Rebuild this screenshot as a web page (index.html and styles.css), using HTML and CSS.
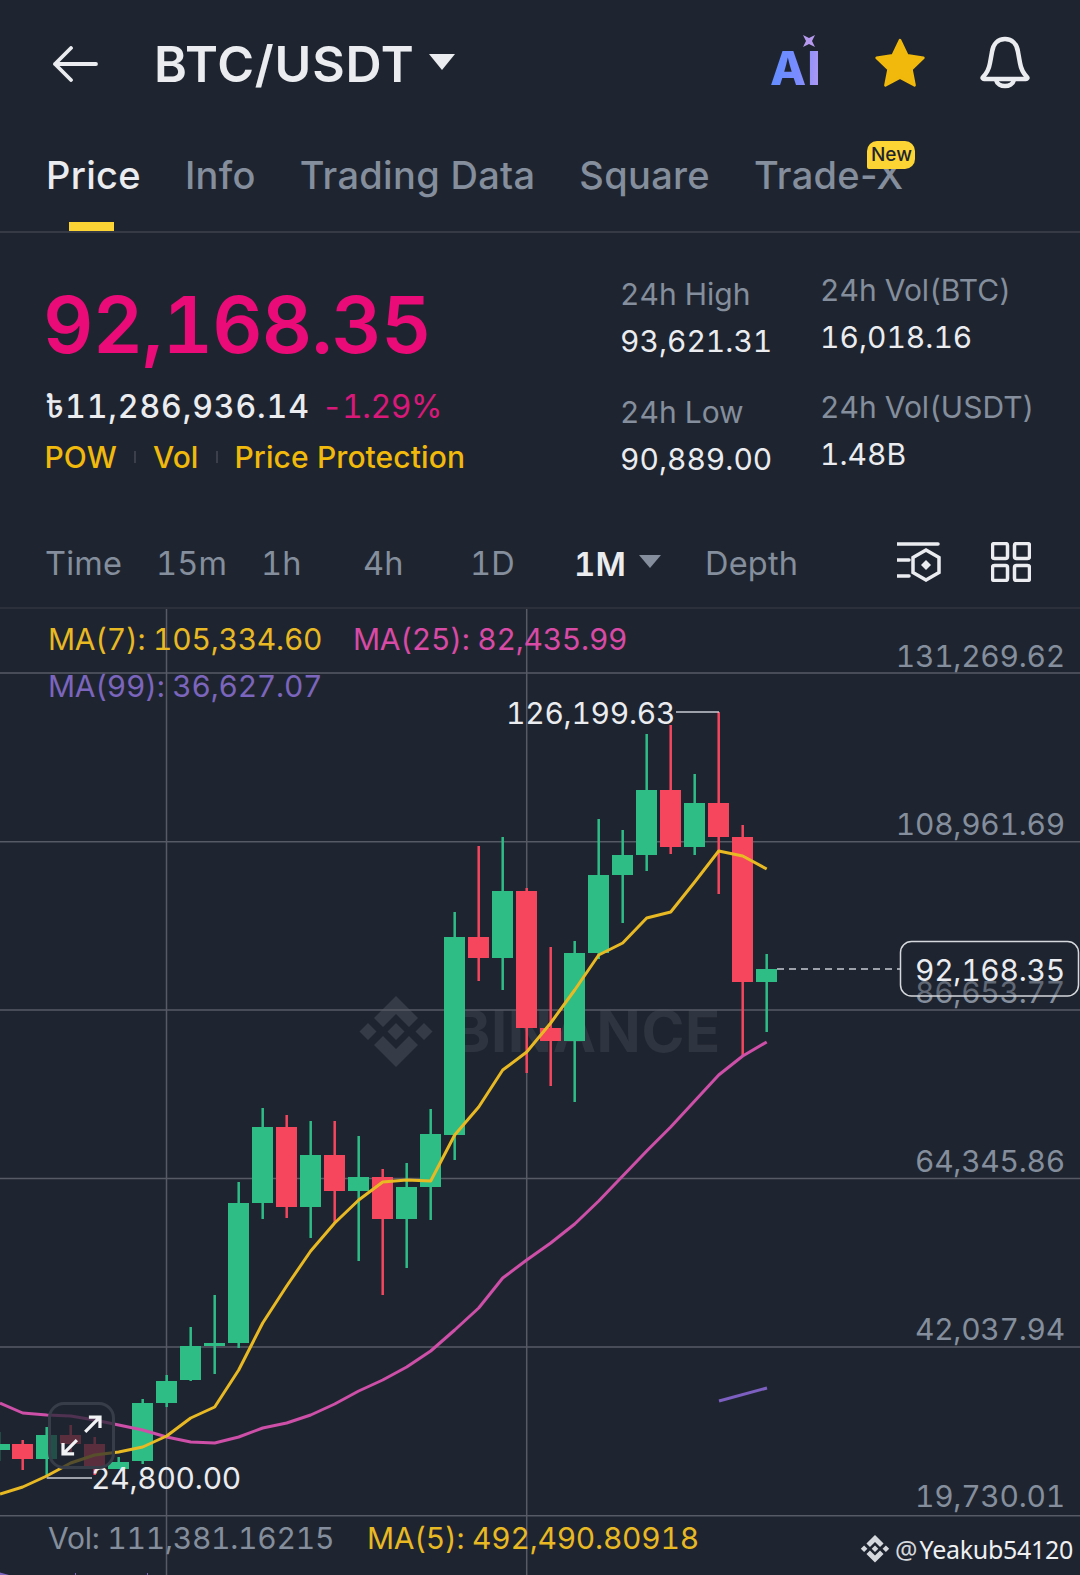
FILE: index.html
```html
<!DOCTYPE html>
<html lang="en">
<head>
<meta charset="utf-8">
<title>BTC/USDT</title>
<link rel="stylesheet" href="styles.css">
</head>
<body>
<main class="page">
  <header class="topbar">
    <svg class="back" viewBox="0 0 46 36"><path d="M44 18H3M19 2 3 18l16 16"/></svg>
    <h1 class="pair">BTC/USDT</h1>
    <svg class="pair-caret" viewBox="0 0 26 16"><path d="M0 0h26L13 16z"/></svg>
    <div class="top-icons">
      <div class="ai"><span class="ai-text">AI</span>
        <svg class="ai-star" viewBox="0 0 12 12"><path d="M0 0 6 3l6-3-3 6 3 6-6-3-6 3 3-6z"/></svg>
      </div>
      <svg class="fav" viewBox="0 0 50 50"><path d="M25 3 32 17.500 47.500 20 36 31 39 46.500 25 39 11 46.500 14 31 2.500 20 18 17.500z"/></svg>
      <svg class="bell" viewBox="0 0 50 53"><path d="M3 41c4-4 6-8 7-14l2-11C13 8 18 3 25 3s12 5 13 13l2 11c1 6 3 10 7 14 1 1 0 2-1 2H4c-1 0-2-1-1-2zM16 44c1 4 5 6 9 6s8-2 9-6"/></svg>
    </div>
  </header>

  <nav class="tabs">
    <a class="tab tab-on">Price</a>
    <a class="tab">Info</a>
    <a class="tab">Trading Data</a>
    <a class="tab">Square</a>
    <a class="tab tab-new">Trade-X<span class="new-badge">New</span></a>
  </nav>

  <section class="stats">
    <div class="stats-left">
      <div class="last-price">92,168.35</div>
      <div class="sub-price"><span class="fiat">৳11,286,936.14</span><span class="change">-1.29%</span></div>
      <div class="tags"><span>POW</span><i class="tag-sep"></i><span>Vol</span><i class="tag-sep"></i><span>Price Protection</span></div>
    </div>
    <div class="col col-a">
      <div class="k k-high">24h High</div><div class="v">93,621.31</div>
      <div class="k k-low">24h Low</div><div class="v">90,889.00</div>
    </div>
    <div class="col col-b">
      <div class="k">24h Vol(BTC)</div><div class="v">16,018.16</div>
      <div class="k k-usdt">24h Vol(USDT)</div><div class="v">1.48B</div>
    </div>
  </section>

  <section class="intervals">
    <span class="iv iv1">Time</span>
    <span class="iv iv2">15m</span>
    <span class="iv iv3">1h</span>
    <span class="iv iv4">4h</span>
    <span class="iv iv5">1D</span>
    <span class="iv iv6 iv-on">1M<svg class="iv-caret" viewBox="0 0 22 13"><path d="M0 0h22L11 13z"/></svg></span>
    <span class="iv iv7">Depth</span>
    <svg class="tool-a" viewBox="0 0 46 42"><path d="M0 3h41M0 19h12M0 35h12"/><path d="M29 9l13 7.500v15L29 39l-13-7.500v-15z"/><path class="solid" d="M29 19l5 5-5 5-5-5z"/></svg>
    <svg class="tool-b" viewBox="0 0 40 40"><rect x="1.500" y="1.500" width="15" height="15" rx="2"/><rect x="23.500" y="1.500" width="15" height="15" rx="2"/><rect x="1.500" y="23.500" width="15" height="15" rx="2"/><rect x="23.500" y="23.500" width="15" height="15" rx="2"/></svg>
  </section>

  <section class="chart">
    <svg class="plot" viewBox="0 609 1080 966">
      <g class="wm">
        <path d="M396 996l22 22-9 9-13-13-13 13-9-9zM396 1067l22-22-9-9-13 13-13-13-9 9zM368 1023l8.500 8.500-8.500 8.500-8.500-8.500zM396 1023l8.500 8.500-8.500 8.500-8.500-8.500zM424 1023l8.500 8.500-8.500 8.500-8.500-8.500z"/>
        <text class="wm-text" x="452" y="1052">BINANCE</text>
      </g>
      <path class="grid" d="M0 673H1080M0 841.700H1080M0 1010H1080M0 1178.600H1080M0 1347H1080M0 1515.700H1080M166.500 609V1575M526.700 609V1575"/>

      <path class="wick-up" d="M-1 1432V1461M46.700 1427V1477M118.700 1457V1469M142.700 1399V1464M166.700 1375V1407M190.700 1327V1381M214.700 1295V1374M238.700 1182V1348M262.700 1108V1219M310.700 1121V1238M358.700 1136V1261M406.700 1163V1268M430.700 1109V1220M454.700 912V1160M502.700 837V990M574.700 941V1102M598.700 819V959M622.700 830V923M646.700 734V871M694.700 774V855M766.700 954V1032"/>
      <path class="wick-dn" d="M22.700 1440V1470M70.700 1425V1452M94.700 1437V1475M286.700 1115V1218M334.700 1121V1223M382.700 1169V1295M478.700 846V981M526.700 888V1073M550.700 947V1086M670.700 725V854M718.700 712V894M742.700 825V1056"/>
      <path class="body-up" d="M-11 1444h21v6h-21zM36 1435h21v24h-21zM108 1462h21v7h-21zM132 1403h21v58h-21zM156 1381h21v22h-21zM180 1346h21v34h-21zM204 1343h21v3h-21zM228 1203h21v140h-21zM252 1127h21v76h-21zM300 1155h21v52h-21zM348 1177h21v14h-21zM396 1187h21v32h-21zM420 1134h21v53h-21zM444 937h21v198h-21zM492 891h21v67h-21zM564 953h21v88h-21zM588 875h21v78h-21zM612 855h21v20h-21zM636 790h21v65h-21zM684 803h21v44h-21zM756 969h21v13h-21z"/>
      <path class="body-dn" d="M12 1444h21v15h-21zM60 1435h21v9h-21zM84 1444h21v22h-21zM276 1127h21v80h-21zM324 1155h21v36h-21zM372 1177h21v42h-21zM468 937h21v21h-21zM516 891h21v137h-21zM540 1028h21v13h-21zM660 790h21v57h-21zM708 803h21v34h-21zM732 837h21v145h-21z"/>

      <path class="ma ma-pink" d="M0 1403 22.700 1413 46.700 1415 70.700 1416 94.700 1420 118.700 1425 142.700 1430 166.700 1437 190.700 1442 214.700 1443 238.700 1437 262.700 1428 286.700 1423 310.700 1415 334.700 1404 358.700 1391 382.700 1380 406.700 1367 430.700 1351 454.700 1330 478.700 1308 502.700 1278 526.700 1260 550.700 1243 574.700 1224 598.700 1201 622.700 1176 646.700 1151 670.700 1127 694.700 1101 718.700 1075 742.700 1056 766.700 1042"/>
      <path class="ma ma-yellow" d="M0 1494 22.700 1487 46.700 1476 70.700 1463 94.700 1455 118.700 1452 142.700 1447 166.700 1436 190.700 1418 214.700 1407 238.700 1370 262.700 1323 286.700 1286 310.700 1251 334.700 1223 358.700 1200 382.700 1182 406.700 1180 430.700 1181 454.700 1135 478.700 1107 502.700 1070 526.700 1052 550.700 1023 574.700 990 598.700 955 622.700 943 646.700 918 670.700 912 694.700 882 718.700 851 742.700 856 766.700 869"/>
      <path class="ma ma-purple" d="M719 1401 767 1388"/>
      <path class="cut-marks" d="M0 1572.500 9 1575H0zM75 1573h1v2h-1zM147 1573h1v2h-1z"/>

      <path class="dash" d="M777 969H900"/>
      <path class="ext" d="M676 712H719M46.700 1478H92"/>

      <text class="t ma7" x="48" y="650">MA(7): 105,334.60</text>
      <text class="t ma25" x="353" y="650">MA(25): 82,435.99</text>
      <text class="t ma99" x="48" y="697">MA(99): 36,627.07</text>
      <text class="t ext-t" x="506" y="724">126,199.63</text>
      <text class="t ext-t" x="91" y="1489">24,800.00</text>
      <text class="t axis" x="1065" y="667">131,269.62</text>
      <text class="t axis" x="1065" y="835">108,961.69</text>
      <text class="t axis" x="1065" y="1003">86,653.77</text>
      <text class="t axis" x="1065" y="1172">64,345.86</text>
      <text class="t axis" x="1065" y="1340">42,037.94</text>
      <text class="t axis" x="1065" y="1507">19,730.01</text>
      <rect class="last-tag" x="900.500" y="941.500" width="178" height="54.500" rx="11"/>
      <text class="t last-t" x="1065" y="981">92,168.35</text>
      <text class="t vol" x="48" y="1549">Vol: 111,381.16215</text>
      <text class="t ma5" x="367" y="1549">MA(5): 492,490.80918</text>
    </svg>

    <div class="expand">
      <svg class="expand-ico" viewBox="0 0 66 66"><path d="M37 29l15-15M41 13h12v12M28 38 14 52M13 41v12h12"/></svg>
    </div>
    <div class="credit">
      <svg class="credit-logo" viewBox="0 0 72 72"><path d="M36 0l22 22-9 9-13-13-13 13-9-9zM36 71l22-22-9-9-13 13-13-13-9 9zM8 27l8.500 8.500-8.500 8.500-8.500-8.500zM36 27l8.500 8.500-8.500 8.500-8.500-8.500zM64 27l8.500 8.500-8.500 8.500-8.500-8.500z"/></svg>
      <span class="credit-at">@</span><span class="credit-name">Yeakub54120</span>
    </div>
  </section>
</main>
</body>
</html>
```

FILE: styles.css
```css
* { box-sizing: border-box; margin: 0; padding: 0; }
html, body { width: 1080px; height: 1575px; overflow: hidden; background: #1f2530; }
body { font-family: Inter, "Noto Sans", "Noto Sans Bengali", "DejaVu Sans", sans-serif; color: #eaecef; font-variant-numeric: tabular-nums; }
.page { width: 1080px; height: 1575px; display: flex; flex-direction: column; overflow: hidden; }

/* top bar */
.topbar { height: 124px; display: flex; align-items: center; padding: 4px 0 0 52px; }
.back { width: 46px; height: 36px; fill: none; stroke: #eaecef; stroke-width: 3.800; stroke-linecap: round; stroke-linejoin: round; }
.pair { margin-left: 56px; font-size: 50px; font-weight: 600; letter-spacing: .8px; line-height: 1; color: #eaecef; }
.pair-caret { width: 26px; height: 16px; margin-left: 14px; margin-top: -4px; fill: #eaecef; }
.top-icons { margin-left: auto; display: flex; align-items: center; margin-top: -3px; }
.ai { position: relative; width: 52px; height: 52px; margin-right: 52px; margin-top: 4px; }
.ai-text { position: absolute; left: 0; bottom: 0; font-size: 47px; line-height: 46px; font-weight: 800; letter-spacing: 1px; background: linear-gradient(95deg, #5f8dff 0%, #7a8cff 55%, #b79af0 100%); -webkit-background-clip: text; background-clip: text; color: transparent; }
.ai-star { position: absolute; left: 33px; top: -4px; width: 12px; height: 12px; fill: #b79af0; }
.fav { width: 52px; height: 52px; fill: #f0b90b; stroke: #f0b90b; stroke-width: 2.500; stroke-linejoin: round; margin-right: 54px; }
.bell { width: 50px; height: 53px; fill: none; stroke: #eaecef; stroke-width: 4.500; stroke-linejoin: round; margin-right: 50px; margin-top: 0; }

/* tabs */
.tabs { height: 109px; display: flex; padding: 24px 0 0 46px; gap: 44px; border-bottom: 2px solid #353a45; font-size: 38px; letter-spacing: .3px; color: #848e9c; font-variant-numeric: normal; }
.tab { position: relative; line-height: 54px; font-weight: 500; height: 83px; }
.tab-on { color: #eaecef; }
.tab-on::after { content: ""; position: absolute; left: 23px; bottom: 0; width: 45px; height: 9px; background: #fcd535; }
.new-badge { position: absolute; right: -12px; top: -7px; width: 48px; height: 28px; border-radius: 10px 10px 10px 2px; background: #fcd535; color: #1f2530; font-size: 19px; font-weight: 500; letter-spacing: 0; line-height: 28px; text-align: center; }

/* stats */
.stats { height: 296px; display: flex; padding-left: 46px; }
.stats-left { width: 574px; }
.last-price { margin-top: 46px; margin-left: -3px; font-size: 78px; line-height: 92px; font-weight: 600; letter-spacing: -.8px; color: #ea0b78; }
.sub-price { margin-top: 14px; display: flex; font-size: 32px; line-height: 44px; }
.fiat { font-weight: 500; letter-spacing: .9px; margin-left: -1px; }
.change { margin-left: 12px; color: #d9187a; letter-spacing: -.5px; }
.tags { margin-top: 8px; margin-left: -1.500px; display: flex; align-items: center; font-size: 30px; letter-spacing: .1px; line-height: 40px; color: #f0b90b; font-weight: 500; }
.tag-sep { display: block; width: 2px; height: 12px; margin: 0 17px; background: #3a3f4b; }
.col { font-size: 30px; }
.col-a { width: 200px; padding-top: 39px; }
.col-b { padding-top: 35px; }
.k { color: #848e9c; line-height: 44px; }
.v { color: #eaecef; line-height: 44px; margin-top: 3px; }
.k-low { margin-top: 27px; }
.k-usdt { margin-top: 26px; }

/* intervals */
.intervals { height: 80px; display: flex; align-items: center; padding: 0 0 8px 45px; font-size: 32.500px; letter-spacing: .2px; color: #848e9c; border-bottom: 2px solid #2b303b; }
.iv { display: flex; align-items: center; line-height: 44px; }
.iv1 { width: 111px; }
.iv2 { width: 105px; }
.iv3 { width: 102px; }
.iv4 { width: 107px; }
.iv5 { width: 104px; }
.iv6 { width: 131px; color: #eaecef; font-weight: 600; font-size: 33px; }
.iv7 { width: 192px; }
.iv-caret { width: 22px; height: 13px; margin-left: 13px; margin-top: -6px; fill: #848e9c; }
.tool-a { width: 46px; height: 42px; margin-top: -4px; fill: none; stroke: #eaecef; stroke-width: 3.500; stroke-linecap: round; margin-right: 48px; }
.tool-a .solid { fill: #eaecef; stroke: none; }
.tool-b { width: 40px; height: 40px; margin-top: -4px; fill: none; stroke: #eaecef; stroke-width: 3.500; }

/* chart */
.chart { position: relative; flex: 1; }
.plot { display: block; width: 1080px; height: 966px; overflow: hidden; }
.wm { fill: #363c47; }
.wm-text { font-size: 58px; font-weight: 700; letter-spacing: .6px; fill: #2f3540; }
.grid { fill: none; stroke: #555a65; stroke-width: 1.500; }
.wick-up, .wick-dn { fill: none; stroke-width: 2.500; }
.wick-up { stroke: #2ebd85; }
.wick-dn { stroke: #f6465d; }
.body-up { fill: #2ebd85; }
.body-dn { fill: #f6465d; }
.ma { fill: none; stroke-width: 3; stroke-linejoin: round; }
.ma-yellow { stroke: #e8b923; }
.ma-pink { stroke: #cd4fa8; }
.ma-purple { stroke: #7c5fc0; }
.cut-marks { fill: #7c65bd; }
.dash { fill: none; stroke: #c8ccd2; stroke-width: 1.500; stroke-dasharray: 7 5; }
.ext { fill: none; stroke: #c8ccd2; stroke-width: 1.500; }
.t { font-family: Inter, "Noto Sans", sans-serif; font-size: 30px; letter-spacing: -.25px; }
.ma7, .ma5 { fill: #e8b923; }
.ma25 { fill: #d84aa5; }
.ma99 { fill: #7c65bd; }
.ext-t, .last-t { fill: #eaecef; }
.axis { fill: #848e9c; text-anchor: end; }
.last-t { text-anchor: end; }
.vol { fill: #848e9c; }
.last-tag { fill: rgba(31, 37, 48, .35); stroke: #d5d8dc; stroke-width: 1.500; }

/* overlays */
.expand { position: absolute; left: 48px; top: 793px; width: 67px; height: 67px; border: 3px solid #383d4a; border-radius: 16px; background: rgba(31, 37, 48, .72); }
.expand-ico { display: block; width: 61px; height: 61px; fill: none; stroke: #f2f3f5; stroke-width: 3.500; }
.credit { position: absolute; right: 7px; bottom: 11px; display: flex; align-items: center; color: #eef0f2; font-family: "Noto Sans", sans-serif; font-size: 25px; line-height: 30px; }
.credit-logo { width: 28px; height: 28px; margin-right: 6px; fill: #d5d8dc; overflow: visible; }
.credit-at { margin-right: 2px; color: #d5d8dc; }
.credit-name { letter-spacing: -.3px; }
```
